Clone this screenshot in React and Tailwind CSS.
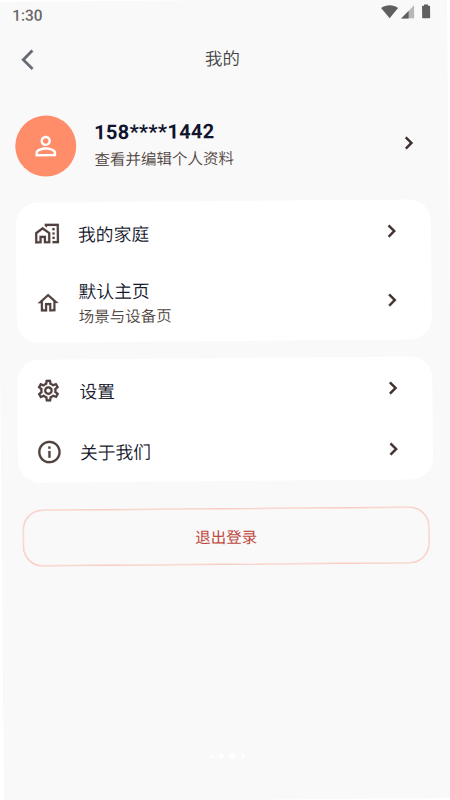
import {
  MdArrowBackIosNew,
  MdChevronRight,
  MdInfoOutline,
  MdOutlineHome,
  MdOutlineMapsHomeWork,
  MdOutlineSettings,
  MdPersonOutline,
} from "react-icons/md";

const groups = [
  {
    className: "mt-[26px] h-[140px]",
    items: [
      { label: "我的家庭", icon: MdOutlineMapsHomeWork, size: 26, height: "h-[62px]" },
      {
        label: "默认主页",
        hint: "场景与设备页",
        icon: MdOutlineHome,
        size: 25,
        height: "h-[77px]",
      },
    ],
  },
  {
    className: "mt-[17px] h-[123px]",
    items: [
      { label: "设置", icon: MdOutlineSettings, size: 26, height: "h-[62px]" },
      { label: "关于我们", icon: MdInfoOutline, size: 27, height: "h-[61px]" },
    ],
  },
];

// The Material glyphs carry an unfilled 24x24 frame that must stay unstroked.
const strokedChevron = "text-[#40302e] [&>path:not([fill=none])]:[stroke-width:0.5]";

function StatusBar() {
  return (
    <div className="flex h-[29px] shrink-0 items-center justify-between pt-px pr-[16px] pl-[15px] text-[#5f5f5f]">
      <span className="text-[15.5px] leading-none font-medium text-[#696969]">1:30</span>
      <svg width="50" height="15" viewBox="0 0 50 15" className="-mt-[4px]" fill="currentColor">
        <path d="M0 3.4C5 -0.3 12-0.3 17 3.4L8.5 13.6Z" />
        <path d="M33 1V14H20Z" opacity=".42" />
        <path d="M27.5 6.5V14H20Z" />
        <path d="M43 1.5V0H47V1.5H48.2Q49 1.5 49 2.3V13.2Q49 14 48.2 14H41.8Q41 14 41 13.2V2.3Q41 1.5 41.8 1.5Z" />
      </svg>
    </div>
  );
}

function Header() {
  return (
    <header className="grid h-[59px] shrink-0 grid-cols-[60px_1fr_60px] items-center">
      <MdArrowBackIosNew
        size={24}
        className="-mt-[2px] ml-[18px] text-[#656973] [&>path:not([fill=none])]:[stroke-width:0.4]"
      />
      <h1 className="pt-[2px] text-center text-[17.5px] leading-none font-[350] text-[#444444]">
        我的
      </h1>
    </header>
  );
}

function Profile() {
  return (
    <div className="mt-[25px] flex h-[62px] shrink-0 items-center pr-[27px] pl-[17px]">
      <div className="flex h-[61px] w-[61px] items-center justify-center rounded-full bg-[#ff8d69] text-white">
        <MdPersonOutline size={31} />
      </div>
      <div className="ml-[18px] flex-1 pt-[2px]">
        <p className="text-[20px] leading-[27px] font-bold tracking-[0.35px] text-[#10152d]">
          158****1442
        </p>
        <p className="text-[15.5px] leading-[28px] font-[350] text-[#4f4340]">查看并编辑个人资料</p>
      </div>
      <MdChevronRight size={25} className={strokedChevron} />
    </div>
  );
}

function MenuRow({ item }) {
  const Icon = item.icon;
  return (
    <div className={`flex items-center pr-[27px] pl-[15px] ${item.height}`}>
      <div className="flex w-[32px] justify-center text-[#51423f]">
        <Icon
          size={item.size}
          className="[&>path:not([fill=none])]:[stroke-width:0.15]"
        />
      </div>
      <div className="ml-[15px] flex-1 pt-[3px]">
        <p className="text-[17.8px] leading-[26px] font-[350] text-[#15182c]">{item.label}</p>
        {item.hint ? (
          <p className="text-[15.5px] leading-[24px] font-[350] text-[#4f4340]">{item.hint}</p>
        ) : null}
      </div>
      <MdChevronRight size={25} className={strokedChevron} />
    </div>
  );
}

export default function App() {
  return (
    <div className="h-[800px] w-[450px] overflow-hidden bg-white">
      <div className="mt-[2px] -ml-[3px] flex h-[800px] w-[450px] origin-top-left -rotate-[0.5deg] flex-col bg-[#f9f9f9] font-[Roboto,'Noto_Sans_CJK_SC',sans-serif]">
        <StatusBar />
        <Header />
        <Profile />

        {groups.map((group) => (
          <section
            key={group.items[0].label}
            className={`mr-[18px] ml-[17px] shrink-0 rounded-[22px] bg-white ${group.className}`}
          >
            {group.items.map((item) => (
              <MenuRow key={item.label} item={item} />
            ))}
          </section>
        ))}

        <button className="mt-[27px] mr-[22px] ml-[21px] h-[57px] shrink-0 rounded-[20px] border border-[#f8cdc4] pt-[4px] text-[15.5px] text-[#bd493f] shadow-[inset_0_0_0_0.5px_#f8cdc4]">
          退出登录
        </button>

        <div className="mt-auto mr-auto mb-[41px] ml-[207px] flex items-center gap-[6px]">
          <span className="h-[3px] w-[3px] rotate-45 bg-white" />
          <span className="h-1 w-1 rotate-45 bg-white" />
          <span className="h-[6px] w-[6px] rounded-full bg-white" />
          <span className="h-[3px] w-[3px] rotate-45 bg-white" />
        </div>
      </div>
    </div>
  );
}
